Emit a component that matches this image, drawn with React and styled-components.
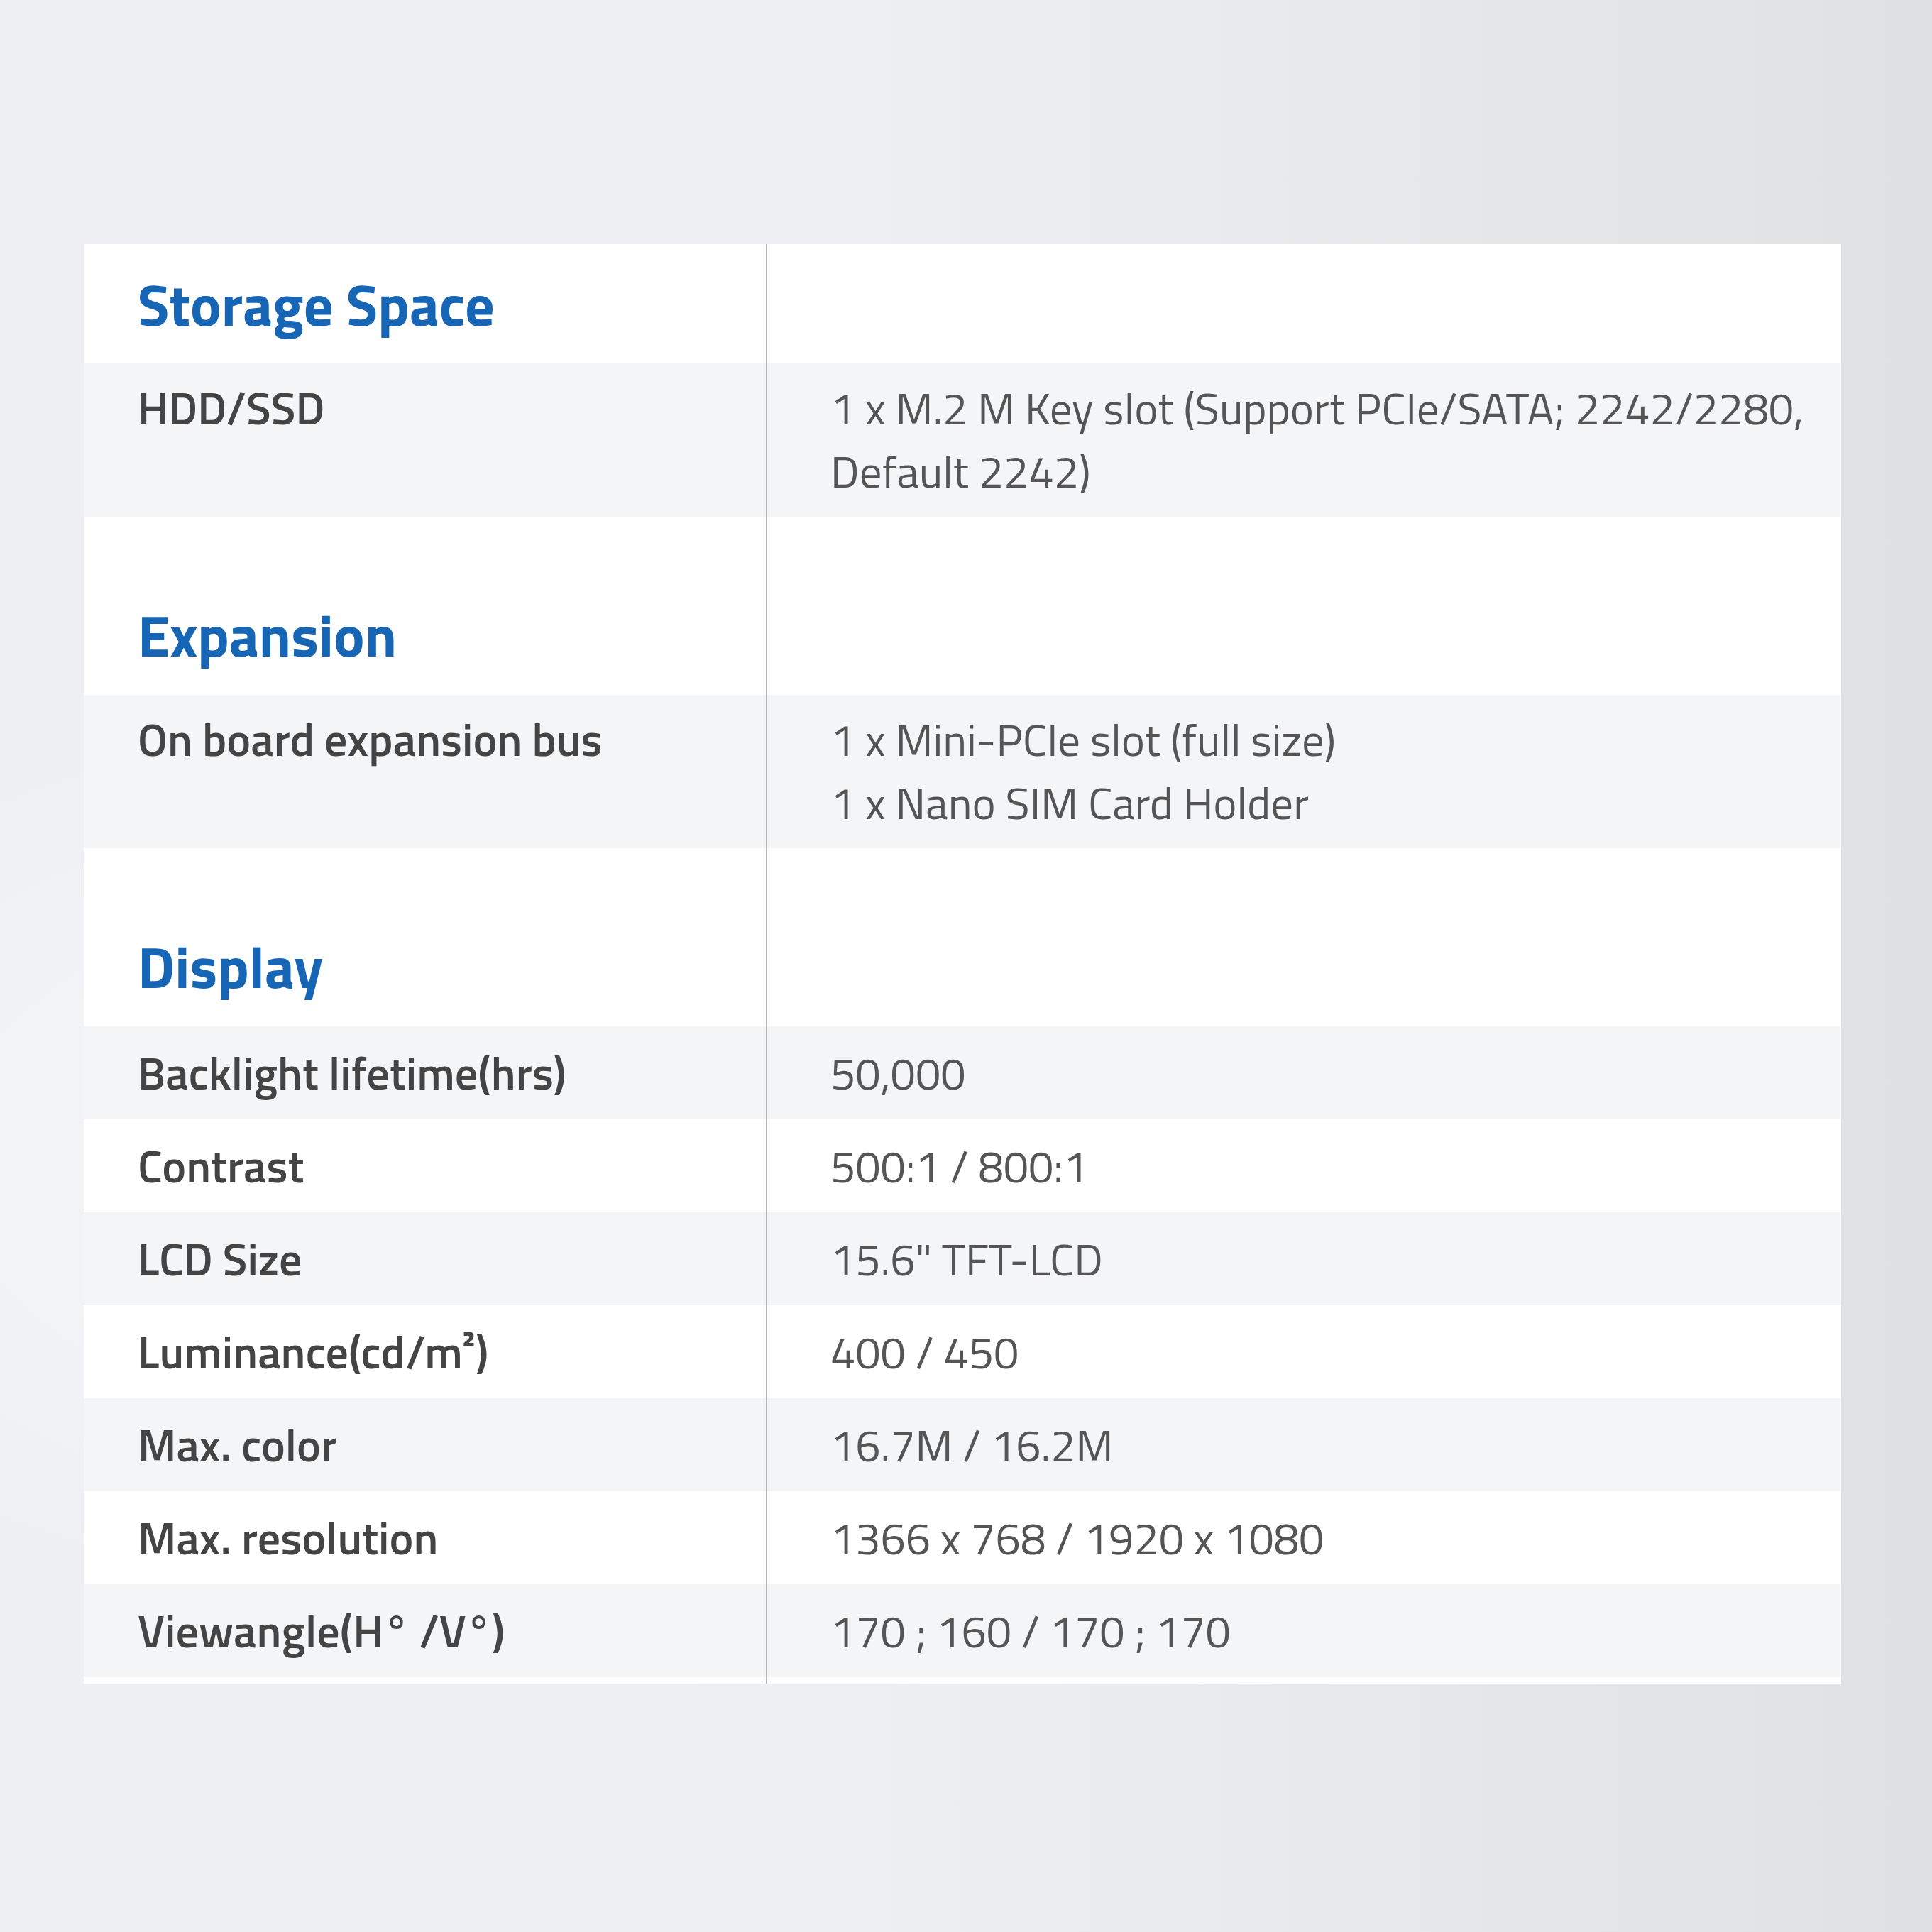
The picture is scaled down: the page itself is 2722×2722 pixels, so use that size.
import styled, { createGlobalStyle } from "styled-components";

const GlobalStyle = createGlobalStyle`
  html, body {
    margin: 0;
    padding: 0;
  }
  body {
    font-family: "Titillium Web", Roboto, "Open Sans", sans-serif;
  }
`;

const specs = [
  {
    title: "Storage Space",
    first: true,
    rows: [
      {
        name: "HDD/SSD",
        value: ["1 x M.2 M Key slot (Support PCIe/SATA; 2242/2280,", "Default 2242)"],
      },
    ],
  },
  {
    title: "Expansion",
    rows: [
      {
        name: "On board expansion bus",
        value: ["1 x Mini-PCIe slot (full size)", "1 x Nano SIM Card Holder"],
      },
    ],
  },
  {
    title: "Display",
    rows: [
      { name: "Backlight lifetime(hrs)", value: ["50,000"] },
      { name: "Contrast", value: ["500:1 / 800:1"] },
      { name: "LCD Size", value: ['15.6" TFT-LCD'] },
      { name: "Luminance(cd/m²)", value: ["400 / 450"] },
      { name: "Max. color", value: ["16.7M / 16.2M"] },
      { name: "Max. resolution", value: ["1366 x 768 / 1920 x 1080"] },
      { name: "Viewangle(H° /V°)", value: ["170 ; 160 / 170 ; 170"] },
    ],
  },
];

function App() {
  return (
    <Page>
      <GlobalStyle />
      <Table>
        {specs.map((group) => (
          <div key={group.title}>
            <Row>
              <TitleCell $first={group.first}>{group.title}</TitleCell>
              <ValueCell />
            </Row>
            {group.rows.map((row, i) => {
              const multi = row.value.length > 1;
              return (
                <DataRow key={row.name} $shaded={i % 2 === 0} $multi={multi}>
                  <NameCell $multi={multi}>{row.name}</NameCell>
                  <ValueCell $multi={multi}>
                    {row.value.map((line) => (
                      <div key={line}>{line}</div>
                    ))}
                  </ValueCell>
                </DataRow>
              );
            })}
          </div>
        ))}
        <Row>
          <Foot />
          <ValueCell $foot />
        </Row>
      </Table>
    </Page>
  );
}

const Page = styled.div`
  min-height: 2722px;
  box-sizing: border-box;
  padding: 344px 0 0 118px;
  background:
    radial-gradient(ellipse 1400px 700px at 30% 60%, rgba(255, 255, 255, 0.45), transparent),
    linear-gradient(90deg, #eff0f3 0%, #eeeff2 45%, #e5e6e8 80%, #e0e1e3 100%);
`;

const Table = styled.div`
  width: 2476px;
  background: #ffffff;
`;

const Row = styled.div`
  display: grid;
  grid-template-columns: 961px 1fr;
  background: #ffffff;
`;

const DataRow = styled(Row)`
  min-height: 131px;
  align-items: ${({ $multi }) => ($multi ? "start" : "stretch")};
  background: ${({ $shaded }) => ($shaded ? "#f4f5f7" : "#ffffff")};
`;

const TitleCell = styled.div`
  padding: ${({ $first }) => ($first ? "25px" : "107px")} 0 0 76px;
  height: ${({ $first }) => ($first ? "143px" : "144px")};
  box-sizing: content-box;
  font-size: 82px;
  line-height: 120px;
  font-weight: 700;
  color: #1766b6;
`;

const NameCell = styled.div`
  display: flex;
  align-items: center;
  padding: 18px 0 ${({ $multi }) => ($multi ? "20px" : "18px")} 76px;
  font-size: 64px;
  line-height: 89px;
  font-weight: 600;
  color: #444444;
`;

const ValueCell = styled.div`
  display: flex;
  flex-direction: column;
  justify-content: center;
  border-left: 2px solid #b3b3b3;
  align-self: stretch;
  padding: ${({ $foot, $multi }) =>
    $foot ? "0" : $multi ? "18px 0 20px 89px" : "18px 0 18px 89px"};
  height: ${({ $foot }) => ($foot ? "9px" : "auto")};
  font-size: 63px;
  line-height: 89px;
  font-weight: 400;
  color: #555555;
`;

const Foot = styled.div`
  height: 9px;
`;

export default App;
